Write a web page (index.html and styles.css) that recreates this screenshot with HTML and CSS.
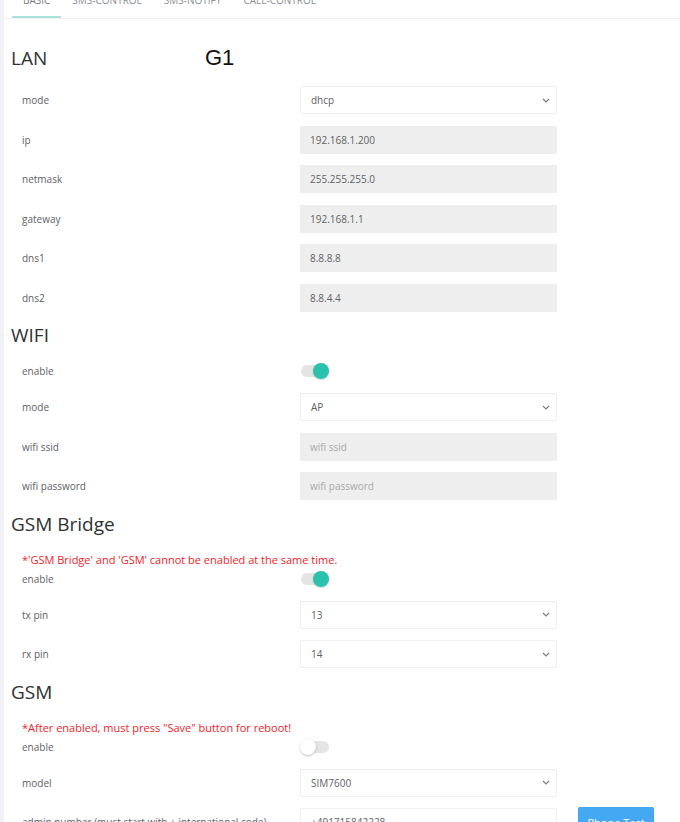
FILE: index.html
```html
<!doctype html>
<html lang="en">
<head>
	<meta charset="UTF-8">
	<title>Settings</title>
	<link rel="stylesheet" href="styles.css">
</head>
<body>
	<div class="page">
		<aside class="rail"></aside>
		<main class="content">
			<nav class="tabs">
				<a class="tab active">Basic</a>
				<a class="tab">SMS-Control</a>
				<a class="tab">SMS-Notify</a>
				<a class="tab">Call-Control</a>
			</nav>

			<form class="settings">
				<h2 class="group-title"><span class="title-text">LAN</span><span class="device">G1</span></h2>
				<div class="row"><label>mode</label><div class="field select">dhcp<svg class="chevron" width="8" height="5" viewBox="0 0 8 5"><path d="M1 1l3 3 3-3" /></svg></div></div>
				<div class="row"><label>ip</label><div class="field input">192.168.1.200</div></div>
				<div class="row"><label>netmask</label><div class="field input">255.255.255.0</div></div>
				<div class="row"><label>gateway</label><div class="field input">192.168.1.1</div></div>
				<div class="row"><label>dns1</label><div class="field input">8.8.8.8</div></div>
				<div class="row"><label>dns2</label><div class="field input">8.8.4.4</div></div>

				<h2 class="group-title">WIFI</h2>
				<div class="row switch-row"><label>enable</label><span class="switch on"><span class="knob"></span></span></div>
				<div class="row"><label>mode</label><div class="field select">AP<svg class="chevron" width="8" height="5" viewBox="0 0 8 5"><path d="M1 1l3 3 3-3" /></svg></div></div>
				<div class="row"><label>wifi ssid</label><div class="field input placeholder">wifi ssid</div></div>
				<div class="row"><label>wifi password</label><div class="field input placeholder">wifi password</div></div>

				<h2 class="group-title">GSM Bridge</h2>
				<p class="warning">*'GSM Bridge' and 'GSM' cannot be enabled at the same time.</p>
				<div class="row switch-row"><label>enable</label><span class="switch on"><span class="knob"></span></span></div>
				<div class="row"><label>tx pin</label><div class="field select">13<svg class="chevron" width="8" height="5" viewBox="0 0 8 5"><path d="M1 1l3 3 3-3" /></svg></div></div>
				<div class="row"><label>rx pin</label><div class="field select">14<svg class="chevron" width="8" height="5" viewBox="0 0 8 5"><path d="M1 1l3 3 3-3" /></svg></div></div>

				<h2 class="group-title">GSM</h2>
				<p class="warning">*After enabled, must press "Save" button for reboot!</p>
				<div class="row switch-row"><label>enable</label><span class="switch"><span class="knob"></span></span></div>
				<div class="row"><label>model</label><div class="field select">SIM7600<svg class="chevron" width="8" height="5" viewBox="0 0 8 5"><path d="M1 1l3 3 3-3" /></svg></div></div>
				<div class="row"><label>admin number (must start with + international code)</label><div class="field text">+491715842228</div><button type="button" class="btn">Phone Test</button></div>
			</form>
		</main>
	</div>
</body>
</html>
```

FILE: styles.css
```css
html { overflow: hidden; }
body {
	margin: 0;
	font-family: "Open Sans", "Noto Sans", sans-serif;
	background: #fff;
	color: #606266;
}

.page { display: flex; min-height: 822px; }
.rail { width: 4px; flex: none; background: #f1f2f7; }
.content { flex: 1; }

/* tabs */
.tabs { display: flex; margin-top: -12px; padding-left: 8px; border-bottom: 1px solid #f1f1f1; }
.tab { padding: 0 11px 6px; line-height: 24px; font-size: 10px; text-transform: uppercase; color: #8d9096; }
.tab.active { box-shadow: inset 0 -2px 0 #a8e2da; color: #7b7e84; }

/* form */
.settings { padding: 27px 0 0 7px; }
.group-title { margin: 0 0 16px; display: flex; font-size: 19px; font-weight: 400; line-height: 24px; color: #303133; }
.title-text { width: 194px; }
.device { font-family: "Liberation Sans", Arial, sans-serif; font-size: 22px; color: #111; }

.row { display: flex; align-items: center; padding-left: 11px; height: 28px; margin-bottom: 11.5px; font-size: 10px; }
.row label { width: 278px; flex: none; }
.switch-row { height: 16px; margin-bottom: 14px; }

.field { box-sizing: border-box; width: 257px; height: 28px; padding: 0 10px; display: flex; align-items: center; color: #606266; }
.select, .text { background: #fff; border: 1px solid #efefef; border-radius: 2px; }
.select { justify-content: space-between; padding-right: 6px; }
.input { background: #eeeeee; }
.placeholder { color: #a9a9a9; }
.chevron { fill: none; stroke: #7a7a7a; stroke-width: 1.1; }

.warning { margin: 0 0 4px 11px; line-height: 15px; font-size: 11px; font-weight: 500; color: #f0242a; }

.switch { position: relative; width: 30px; height: 16px; }
.switch::before { content: ""; position: absolute; left: 1px; right: 1px; top: 2px; height: 12px; border-radius: 6px; background: #e4e4e4; }
.knob { position: absolute; top: 0; left: 0; width: 16px; height: 16px; border-radius: 50%; background: #fff; box-shadow: 0 1px 2px rgba(0,0,0,0.25); }
.switch.on .knob { left: 13px; background: #2bc2ad; box-shadow: 0 1px 2px rgba(0,0,0,0.15); }

.btn { margin-left: 21px; width: 76px; height: 30px; border: 0; border-radius: 2px; background: #45a8f2; color: #fff; font-family: inherit; font-size: 11px; }
```
